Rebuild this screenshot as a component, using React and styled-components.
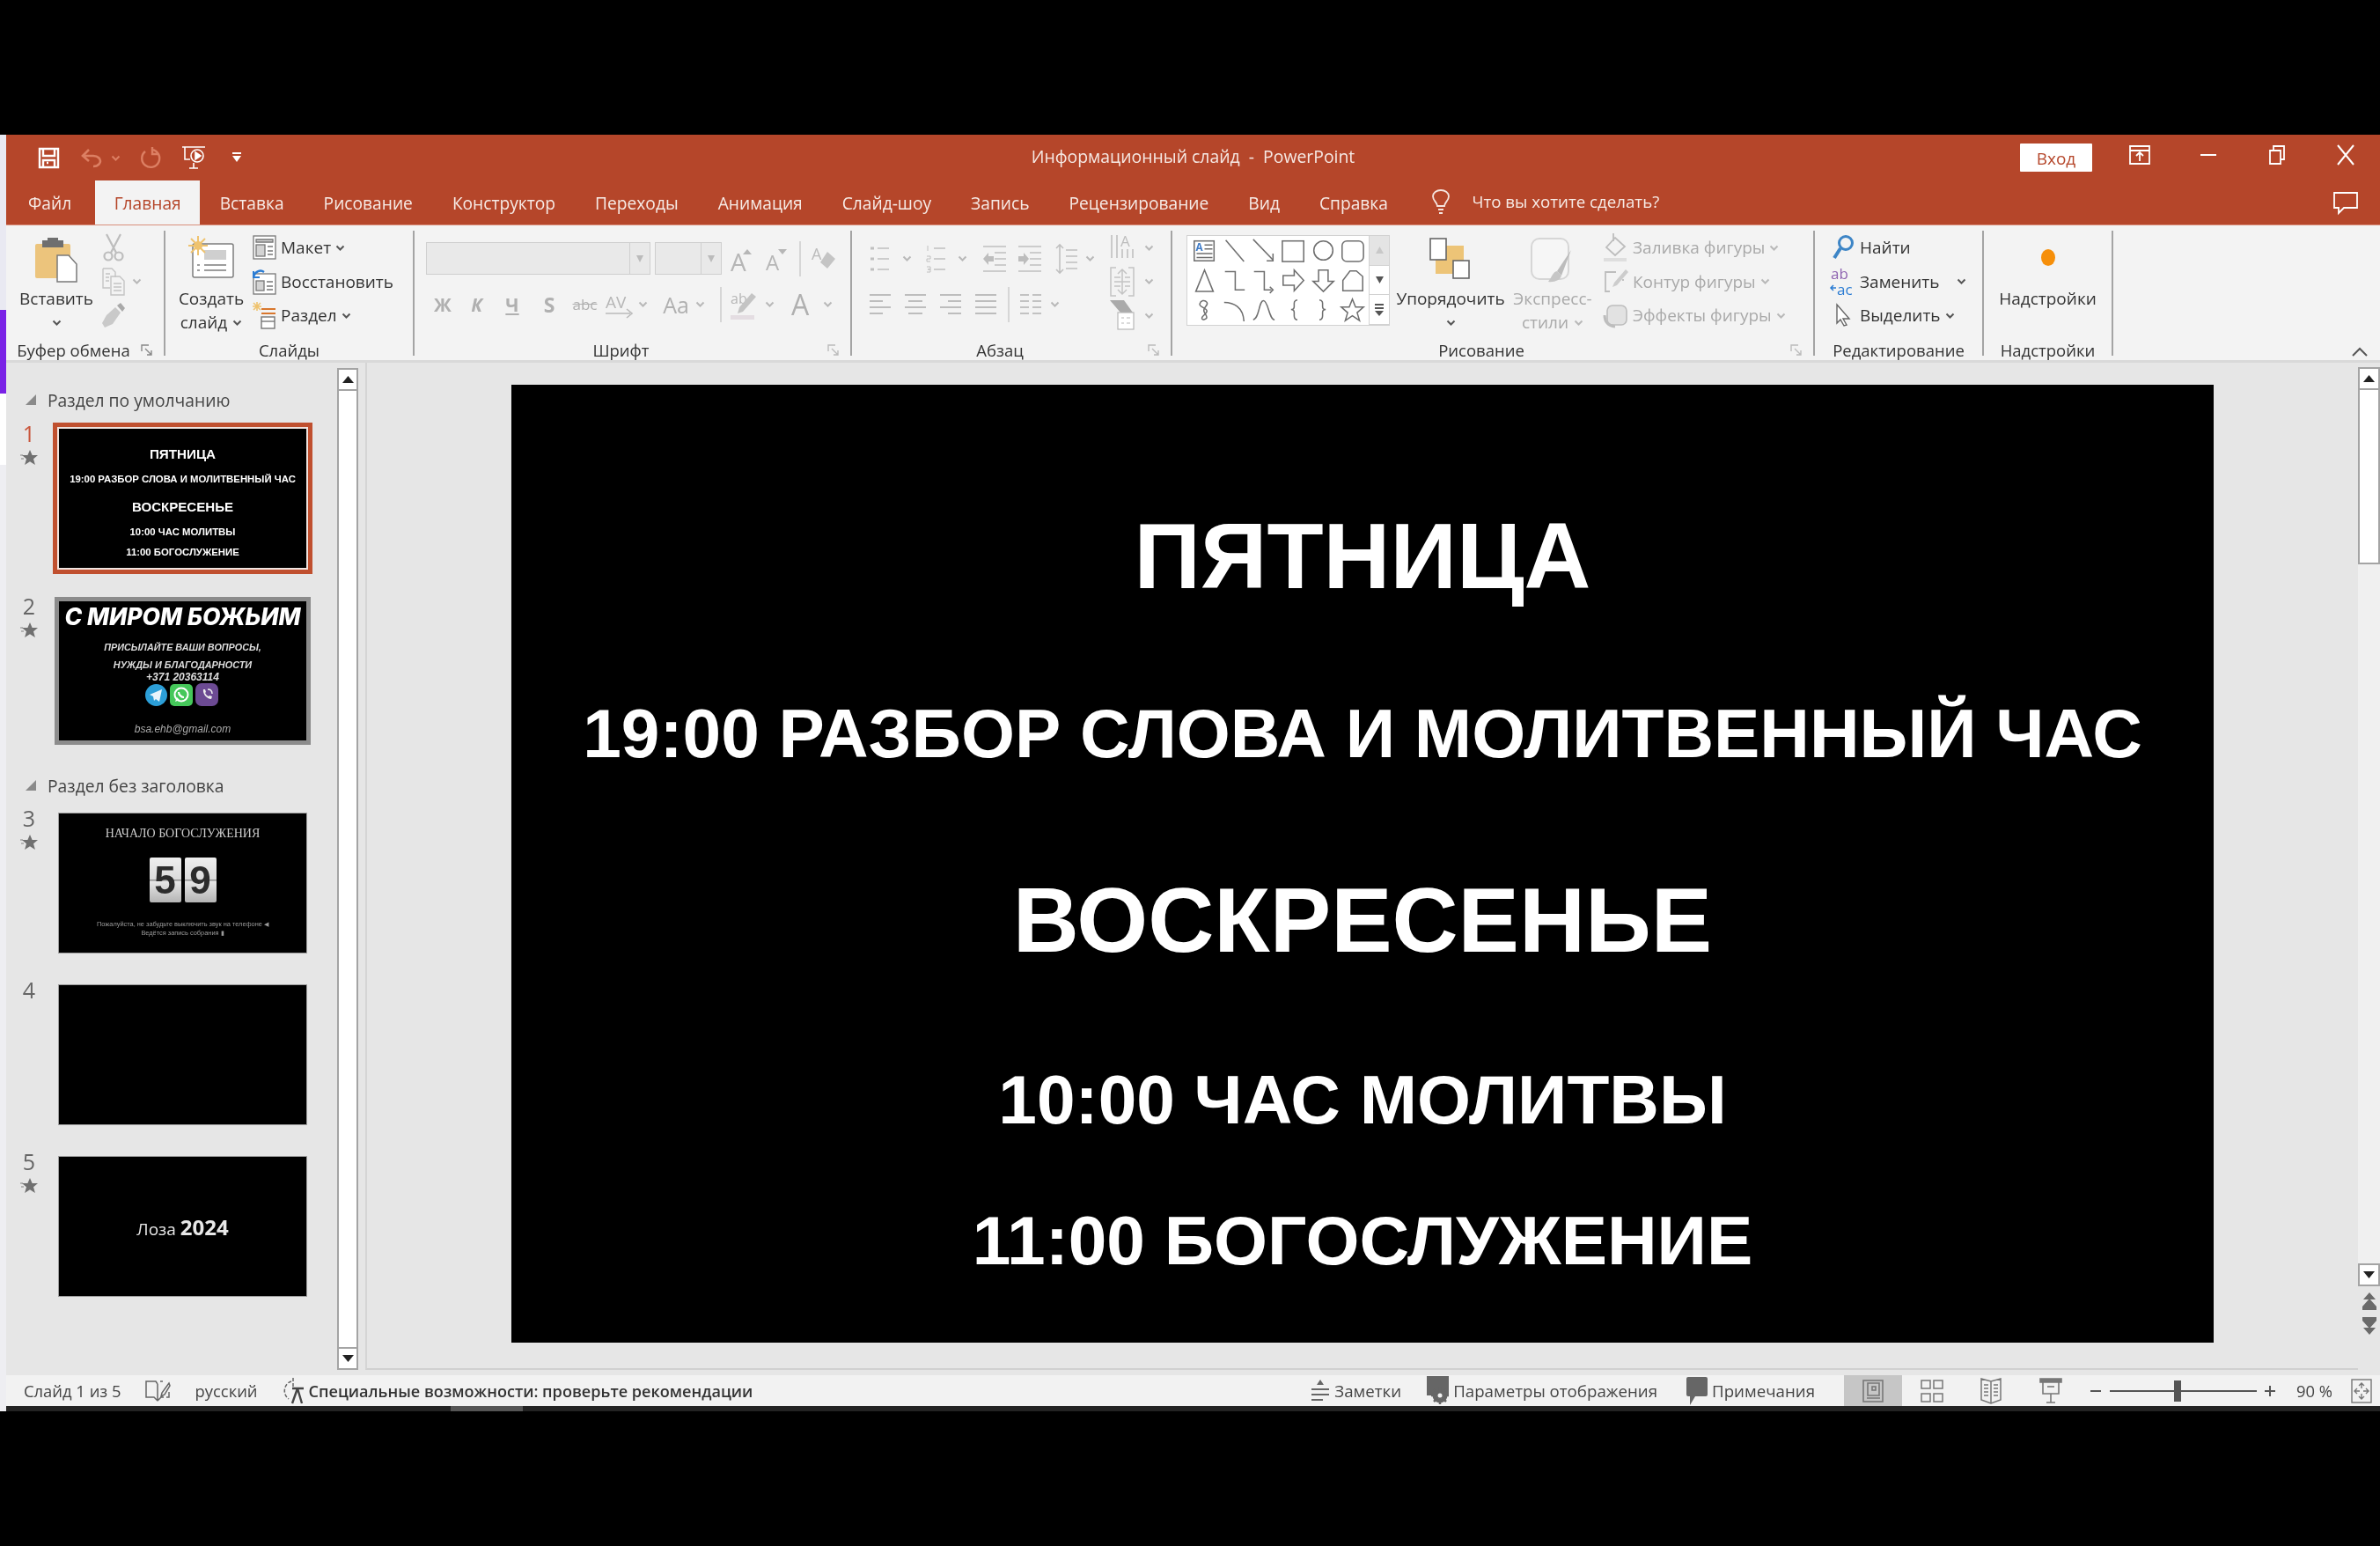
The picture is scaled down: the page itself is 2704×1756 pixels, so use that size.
import React from "react";
import styled, { createGlobalStyle } from "styled-components";

const Global = createGlobalStyle`
  html, body { margin: 0; padding: 0; background: #000; }
  body { width: 2704px; height: 1756px; overflow: hidden; font-family: "Open Sans", "Noto Sans", sans-serif; }
`;

const RED = "#b5462a";

const Page = styled.div`
  width: 2704px;
  height: 1756px;
  padding-top: 153px;
  box-sizing: border-box;
  background: #000;
`;
const Frame = styled.div`
  display: flex;
  height: 1450px;
  filter: blur(0.5px);
`;
const Strip = styled.div`
  width: 7px;
  flex: none;
  display: flex;
  flex-direction: column;
`;
const StripPart = styled.div`
  height: ${(p) => p.$h}px;
  flex-grow: ${(p) => (p.$h ? 0 : 1)};
  background: ${(p) => p.$c};
`;
const Main = styled.div`
  flex: 1;
  display: flex;
  flex-direction: column;
  min-width: 0;
`;
const BottomEdge = styled.div`
  display: flex;
  height: 6px;
  background: #232323;
`;
const EdgeMark = styled.div`
  width: 82px;
  margin-left: 505px;
  background: #555;
`;

const TitleBar = styled.div`
  height: 52px;
  flex: none;
  background: ${RED};
  display: grid;
  grid-template-columns: 1fr auto 1fr;
  align-items: center;
`;
const Quick = styled.div`
  display: flex;
  align-items: center;
  padding-left: 36px;
`;
const QuickCell = styled.div`
  display: flex;
  justify-content: center;
  width: ${(p) => p.$w}px;
  margin-left: ${(p) => p.$ml || 0}px;
`;
const Title = styled.div`
  color: #f6e9e4;
  font-size: 19.4px;
  padding-bottom: 3px;
  white-space: pre;
`;
const WinControls = styled.div`
  display: flex;
  justify-content: flex-end;
  align-items: center;
`;
const Login = styled.div`
  width: 82px;
  height: 32px;
  background: #fff;
  color: ${RED};
  font-size: 19px;
  line-height: 34px;
  text-align: center;
  border-radius: 1px;
  margin-right: 15px;
`;
const WinBtn = styled.div`
  width: 78px;
  height: 40px;
  display: flex;
  align-items: center;
  justify-content: center;
  margin-top: -6px;
`;

const TabBar = styled.div`
  height: 51px;
  flex: none;
  background: ${RED};
  display: flex;
  align-items: stretch;
  padding-left: 2px;
  border-bottom: 1px solid #d98f7c;
  box-sizing: border-box;
`;
const Tab = styled.div`
  padding: 3px ${(p) => p.$px || 22.5}px 0;
  font-size: 19.2px;
  line-height: 46px;
  color: ${(p) => (p.$active ? RED : "#f7ebe6")};
  background: ${(p) => (p.$active ? "#f3f3f3" : "transparent")};
  margin-right: ${(p) => p.$mr || 0}px;
`;
const Tell = styled.div`
  display: flex;
  align-items: center;
  gap: 24px;
  margin-left: 27px;
  color: #f7ebe6;
  font-size: 18.7px;
  padding-bottom: 3px;
`;
const CommentBtn = styled.div`
  margin-left: auto;
  width: 78px;
  display: flex;
  justify-content: center;
  align-items: center;
`;

const Ribbon = styled.div`
  height: 156px;
  flex: none;
  background: #f3f3f3;
  border-bottom: 3px solid #d9d9d9;
  box-sizing: border-box;
  display: flex;
  padding-top: 6px;
`;
const Group = styled.div`
  width: ${(p) => p.$w}px;
  height: 142px;
  flex: none;
  box-sizing: border-box;
  border-right: 2px solid #a4a4a4;
  display: flex;
  flex-direction: column;
`;
const GroupBody = styled.div`
  height: 124px;
  display: flex;
  padding-left: ${(p) => p.$pl || 0}px;
`;
const GroupFoot = styled.div`
  display: flex;
  height: 18px;
`;
const GroupLabel = styled.div`
  flex: 1;
  text-align: center;
  font-size: 18.5px;
  line-height: 24px;
  color: #333;
  white-space: nowrap;
`;
const Launcher = styled.div`
  width: 26px;
  flex: none;
  padding-top: 5px;
  box-sizing: border-box;
`;
const Large = styled.div`
  width: ${(p) => p.$w}px;
  margin-left: ${(p) => p.$ml || 0}px;
  flex: none;
  display: flex;
  flex-direction: column;
  align-items: center;
  color: ${(p) => (p.$off ? "#a9a9a9" : "#333")};
  font-size: 19px;
  line-height: 27px;
  white-space: nowrap;
`;
const LargeIcon = styled.div`
  height: 64px;
  padding-top: ${(p) => p.$pt || 6}px;
  box-sizing: border-box;
`;
const TextChevRow = styled.div`
  display: flex;
  align-items: center;
  justify-content: center;
  gap: 6px;
  height: 27px;
`;
const SmallCol = styled.div`
  display: flex;
  flex-direction: column;
  margin-left: ${(p) => p.$ml || 0}px;
`;
const SmallRow = styled.div`
  height: 38.5px;
  display: flex;
  align-items: center;
  color: ${(p) => (p.$off ? "#a9a9a9" : "#333")};
  font-size: 19px;
  white-space: nowrap;
`;
const SmallIcon = styled.div`
  width: ${(p) => p.$w || 26}px;
  margin-right: ${(p) => p.$mr ?? 6}px;
  display: flex;
  justify-content: center;
  flex: none;
`;
const Tools = styled.div`
  display: flex;
  flex-direction: column;
  padding-top: 13px;
`;
const ToolRow = styled.div`
  display: flex;
  align-items: center;
  height: 37px;
  margin-top: ${(p) => p.$mt || 0}px;
`;
const Cell = styled.div`
  width: ${(p) => p.$w}px;
  margin-left: ${(p) => p.$ml || 0}px;
  flex: none;
  display: flex;
  justify-content: center;
  align-items: center;
  color: #b0b0b0;
  font-size: ${(p) => p.$fs || 20}px;
  font-weight: ${(p) => p.$fw || 400};
  font-style: ${(p) => p.$fst || "normal"};
  text-decoration: ${(p) => p.$td || "none"};
`;
const VSep = styled.div`
  width: 2px;
  height: 40px;
  flex: none;
  background: #d6d6d6;
  margin-left: ${(p) => p.$ml || 0}px;
`;
const InputBox = styled.div`
  width: ${(p) => p.$w}px;
  height: 37px;
  margin-left: ${(p) => p.$ml || 0}px;
  box-sizing: border-box;
  border: 1px solid #cfcfcf;
  background: #e9e9e9;
  flex: none;
  display: flex;
  justify-content: flex-end;
`;
const InputDrop = styled.div`
  width: 22px;
  border-left: 1px solid #cfcfcf;
  display: flex;
  align-items: center;
  justify-content: center;
`;
const Gallery = styled.div`
  margin: 5px 0 0 16px;
  width: 231px;
  height: 103px;
  flex: none;
  box-sizing: border-box;
  border: 1px solid #d2d2d2;
  background: #fff;
  display: flex;
`;
const ShapeGrid = styled.div`
  width: 206px;
  padding: 0 0 0 3px;
  box-sizing: border-box;
  display: grid;
  grid-template-columns: repeat(6, 33.6px);
  grid-auto-rows: 33.6px;
  justify-items: center;
  align-items: center;
`;
const GalleryScroll = styled.div`
  flex: 1;
  display: flex;
  flex-direction: column;
  border-left: 1px solid #d2d2d2;
`;
const GalleryBtn = styled.div`
  flex: 1;
  display: flex;
  align-items: center;
  justify-content: center;
  background: ${(p) => (p.$off ? "#e4e4e4" : "#fff")};
  border-bottom: 1px solid #d2d2d2;
`;
const Dot = styled.div`
  width: 16px;
  height: 19px;
  margin-top: 20px;
  border-radius: 50%;
  background: #f68f0a;
`;
const Collapse = styled.div`
  margin: 133px 0 0 auto;
  width: 32px;
`;

const Workspace = styled.div`
  flex: 1;
  min-height: 0;
  display: flex;
  background: #e6e6e6;
`;
const Pane = styled.div`
  width: 376px;
  flex: none;
  padding-top: 27px;
  box-sizing: border-box;
`;
const SectionHead = styled.div`
  display: flex;
  align-items: center;
  height: 30px;
  margin-top: ${(p) => p.$mt || 0}px;
  padding-left: 22px;
  gap: 13px;
  font-size: 19.3px;
  color: #444;
  white-space: nowrap;
`;
const SlideRow = styled.div`
  display: flex;
  margin-top: ${(p) => p.$mt}px;
`;
const NumCol = styled.div`
  width: 52px;
  margin-right: 8px;
  flex: none;
  display: flex;
  flex-direction: column;
  align-items: center;
`;
const Num = styled.div`
  font-size: 25px;
  line-height: 26px;
  margin-top: -8px;
  color: ${(p) => (p.$active ? "#c9563c" : "#666")};
`;
const StarBox = styled.div`
  margin-top: 6px;
`;
const Thumb = styled.div`
  width: 281px;
  height: 158px;
  flex: none;
  background: #000;
  overflow: hidden;
  font-size: 14.5px;
  box-shadow: ${(p) => p.$ring};
  display: flex;
  flex-direction: column;
  align-items: center;
`;
const ScrollBar = styled.div`
  width: ${(p) => p.$w}px;
  flex: none;
  display: flex;
  flex-direction: column;
  padding-top: ${(p) => p.$pt}px;
  padding-bottom: ${(p) => p.$pb}px;
  box-sizing: border-box;
`;
const ScrollBtn = styled.div`
  height: 26px;
  flex: none;
  box-sizing: border-box;
  border: 2px solid #a4a4a4;
  background: #fff;
  display: flex;
  align-items: center;
  justify-content: center;
`;
const ScrollThumb = styled.div`
  height: ${(p) => (p.$h ? p.$h + "px" : "auto")};
  flex-grow: ${(p) => (p.$h ? 0 : 1)};
  box-sizing: border-box;
  border: 2px solid #a4a4a4;
  border-top: none;
  border-bottom: ${(p) => (p.$h ? "2px solid #a4a4a4" : "none")};
  background: #fff;
`;
const ScrollTrack = styled.div`
  flex: 1;
  background: #f0f0f0;
`;
const PageJump = styled.div`
  display: flex;
  justify-content: center;
  margin-top: ${(p) => p.$mt}px;
`;
const EditorWrap = styled.div`
  flex: 1;
  min-width: 0;
  margin-left: 8px;
  margin-bottom: 6px;
  border-left: 2px solid #d5d5d5;
  border-bottom: 2px solid #d0d0d0;
  padding: 25px 0 0 164px;
  box-sizing: border-box;
`;
const SlideMain = styled.div`
  width: 1934px;
  height: 1088px;
  background: #000;
  font-size: 100px;
`;
const Lines = styled.div`
  display: flex;
  flex-direction: column;
  align-items: center;
  padding-top: 1.415em;
`;
const Line = styled.div`
  font-family: "Liberation Sans", Arial, sans-serif;
  font-weight: 700;
  color: #fff;
  line-height: 1;
  white-space: nowrap;
  font-size: ${(p) => p.$s}em;
  margin-top: ${(p) => p.$mt / p.$s}em;
`;
const T2Head = styled.div`
  font-family: Inter, sans-serif;
  font-weight: 800;
  font-style: italic;
  font-size: 26.5px;
  line-height: 34px;
  color: #fff;
  white-space: nowrap;
`;
const T2Text = styled.div`
  font-family: "Liberation Sans", sans-serif;
  font-style: italic;
  font-weight: ${(p) => p.$fw || 700};
  font-size: ${(p) => p.$fs}px;
  line-height: ${(p) => p.$lh}px;
  margin-top: ${(p) => p.$mt}px;
  color: ${(p) => p.$c || "#ddd"};
  white-space: nowrap;
`;
const T2Icons = styled.div`
  display: flex;
  align-items: center;
  gap: 3px;
  height: 26px;
  margin-left: -2px;
`;
const T3Title = styled.div`
  font-family: "Liberation Serif", serif;
  font-size: 14px;
  line-height: 16px;
  margin-top: 15px;
  color: #ccc;
  white-space: nowrap;
`;
const Flips = styled.div`
  display: flex;
  gap: 4px;
  margin-top: 19px;
`;
const Flip = styled.div`
  width: 36px;
  height: 51px;
  border-radius: 2px;
  background: linear-gradient(#eeeeee, #dcdcdc 48%, #8e8e8e 50%, #e6e6e6 54%, #b4b4b4);
  font-family: "Liberation Sans", sans-serif;
  font-weight: 700;
  font-size: 44px;
  line-height: 51px;
  text-align: center;
  color: #2c2c2c;
`;
const T3Note = styled.div`
  font-family: "Liberation Sans", sans-serif;
  font-size: 7.4px;
  line-height: 10px;
  margin-top: ${(p) => p.$mt || 0}px;
  color: #9a9a9a;
  white-space: nowrap;
`;
const T5Text = styled.div`
  margin: auto;
  display: flex;
  align-items: baseline;
  gap: 5px;
  color: #e8e8e8;
`;
const T5Word = styled.span`
  font-size: ${(p) => p.$fs}px;
  font-weight: ${(p) => p.$fw};
`;

const Status = styled.div`
  height: 35px;
  flex: none;
  background: #f2f2f2;
  display: flex;
  align-items: center;
  font-size: 18.4px;
  color: #444;
  white-space: nowrap;
`;
const StatusItem = styled.div`
  display: flex;
  align-items: center;
  gap: ${(p) => p.$gap ?? 5}px;
  margin-left: ${(p) => p.$ml || 0}px;
  font-size: ${(p) => p.$fs || 18.4}px;
  font-weight: ${(p) => p.$fw || 400};
  color: ${(p) => p.$c || "#444"};
`;
const StatusRight = styled.div`
  margin-left: auto;
  margin-right: 6px;
  display: flex;
  align-items: center;
  height: 100%;
`;
const ViewBtn = styled.div`
  width: ${(p) => p.$w}px;
  height: 100%;
  margin-left: ${(p) => p.$ml || 0}px;
  flex: none;
  display: flex;
  align-items: center;
  justify-content: center;
  background: ${(p) => (p.$active ? "#c6c6c6" : "transparent")};
`;
const ZoomTrack = styled.div`
  width: 167px;
  height: 2px;
  margin-left: 9px;
  background: #555;
  position: relative;
  flex: none;
`;
const ZoomThumb = styled.div`
  position: absolute;
  left: 73px;
  top: -11px;
  width: 8px;
  height: 24px;
  background: #555;
`;

const Svg = styled.svg`
  display: block;
  flex: none;
  overflow: visible;
  fill: none;
  stroke: ${(p) => p.$c || "#b4b4b4"};
  stroke-width: ${(p) => p.$sw || 1.5};
`;
const Ic = ({ w, h, c, sw, children }) => (
  <Svg width={w} height={h} viewBox={`0 0 ${w} ${h}`} $c={c} $sw={sw}>{children}</Svg>
);
const Chev = ({ c = "#555" }) => (
  <Ic w={11} h={7} c={c} sw={2}><path d="M1.5 1.5l4 4 4-4" /></Ic>
);
const OffChev = () => <Chev c="#b8b8b8" />;
const Tri = ({ up, c = "#222", w = 14 }) => (
  <Ic w={w} h={8} c="none"><path d={up ? `M0 8L${w / 2} 0L${w} 8z` : `M0 0L${w / 2} 8L${w} 0z`} fill={c} /></Ic>
);
const Launch = ({ c = "#888" }) => (
  <Ic w={14} h={14} c={c} sw={1.4}><path d="M1 8V1h8M5 5l7 7M12 7v5H7" /></Ic>
);

const Save = () => (
  <Ic w={25} h={25} c="#fff" sw={2.4}>
    <path d="M2 2h21v21H2z" /><path d="M6 2v8h13V2" /><path d="M6 23v-8h13v8M10 18h2" />
  </Ic>
);
const Undo = () => (
  <Ic w={24} h={22} c="#dc7f63" sw={2.6}><path d="M9 2L2 9l7 6M3 9h11c6 0 8 4 8 6s-2 6-8 6" /></Ic>
);
const Redo = () => (
  <Ic w={24} h={24} c="#dc7f63" sw={2.4}><path d="M7 5a10 10 0 1 0 8-2M15 0v8h7" /></Ic>
);
const Present = () => (
  <Ic w={28} h={28} c="#fff" sw={1.6}>
    <path d="M1 2h26M4 2v14h6M9 26h10M14 20v6" /><circle cx="18" cy="12" r="7" /><path d="M16 8l6 4-6 4z" fill="#fff" />
  </Ic>
);
const QaMore = () => (
  <Ic w={10} h={12} c="none"><path d="M0 0h10v2H0zM0 4h10L5 11z" fill="#fff" /></Ic>
);
const GalleryMore = () => (
  <Ic w={10} h={14} c="none"><path d="M0 0h10v2H0zM0 4h10v2H0zM0 8h10l-5 6z" fill="#555" /></Ic>
);
const BoxUp = () => (
  <Ic w={24} h={22} c="#fff" sw={1.8}><path d="M1 1h22v20H1zM1 6h22M12 18v-9M8 12l4-4 4 4" /></Ic>
);
const Minimize = () => <Ic w={18} h={4} c="#fff" sw={2}><path d="M0 2h18" /></Ic>;
const Restore = () => (
  <Ic w={18} h={24} c="#fff" sw={1.8}><path d="M1 7h12v15H1zM5 7V2h12v15h-4" /></Ic>
);
const CloseX = () => <Ic w={20} h={24} c="#fff" sw={2}><path d="M1 1l18 22M19 1L1 23" /></Ic>;
const Comment = () => (
  <Ic w={28} h={25} c="#fff" sw={1.8}><path d="M1 1h26v17H12l-6 6v-6H1z" /></Ic>
);
const Bulb = () => (
  <Ic w={22} h={28} c="#f5e4de" sw={1.8}>
    <path d="M7 19c0-4-5-6-5-11a9 7 0 0 1 18 0c0 5-5 7-5 11zM8 23h6M9 27h4" />
  </Ic>
);

const PasteIcon = () => (
  <Ic w={48} h={50} c="none">
    <rect x="0" y="7" width="40" height="39" rx="2" fill="#ecc47c" />
    <path d="M8 3h6V0h12v3h6v8H8z" fill="#6f6f6f" />
    <path d="M25 20h13l9 10v20H25z" fill="#fff" stroke="#7a7a7a" strokeWidth="1.5" />
  </Ic>
);
const Scissors = () => (
  <Ic w={24} h={32} c="#bdbdbd" sw={2.2}>
    <circle cx="6" cy="26" r="4.5" /><circle cx="18" cy="26" r="4.5" /><path d="M4 1l11 21M20 1L9 22" />
  </Ic>
);
const Copy = () => (
  <Ic w={26} h={32} c="#c4c4c4" sw={1.4}>
    <path d="M1 1h10l4 4v6M1 1v22h8M10 10h10l5 5v16H10zM13 18h9M13 22h9M13 26h9M4 7h5M4 11h4M4 15h4" />
  </Ic>
);
const Brush = () => (
  <Ic w={28} h={30} c="none">
    <path d="M16 6l6 6-9 13-9 4-3-5 5-9z" fill="#c9c9c9" /><path d="M18 4l4-3 5 6-3 4z" fill="#a9a9a9" />
  </Ic>
);
const NewSlide = () => (
  <Ic w={52} h={50} c="#7d7d7d" sw={1.5}>
    <rect x="5" y="9" width="46" height="38" rx="2" fill="#fff" />
    <rect x="18" y="16" width="25" height="11" fill="#cfcfcf" stroke="none" />
    <path d="M18 33h25M18 39h25M10 33h3M10 39h3" />
    <path d="M11 0v22M0 11h22M3 3l16 16M19 3L3 19" stroke="#efc36f" strokeWidth="2" />
    <circle cx="11" cy="11" r="5" fill="#efc36f" stroke="none" />
  </Ic>
);
const LayoutIcon = () => (
  <Ic w={27} h={28} c="#777" sw={1.3}>
    <rect x="1" y="1" width="25" height="26" fill="#fff" /><path d="M4 5h19v3H4z" fill="#d3d3d3" />
    <rect x="4" y="11" width="10" height="13" fill="#d3d3d3" /><path d="M17 13h6M17 18h6M17 22h6" />
  </Ic>
);
const ResetIcon = () => (
  <Ic w={27} h={30} c="#777" sw={1.3}>
    <rect x="1" y="6" width="25" height="23" fill="#fff" /><rect x="4" y="14" width="9" height="11" fill="#d3d3d3" />
    <path d="M16 15h7M16 20h7M16 24h7" />
    <path d="M1 9c2-6 8-8 12-5" stroke="#2b7cd3" strokeWidth="2.4" /><path d="M1 3v7h7" stroke="#2b7cd3" strokeWidth="2" />
  </Ic>
);
const SectionIcon = () => (
  <Ic w={27} h={32} c="#777" sw={1.4}>
    <path d="M5 1v10M0 6h10M1 2l8 8M9 2l-8 8" stroke="#efc36f" strokeWidth="1.6" />
    <path d="M10 9h16M10 14h16" stroke="#d9772d" strokeWidth="2" />
    <rect x="10" y="18" width="15" height="13" fill="#fff" /><path d="M10 23h15" />
  </Ic>
);
const Bigger = ({ down }) => (
  <Ic w={26} h={32} c="none">
    <text x="0" y={down ? 29 : 30} fontSize={down ? 24 : 28} fill="#b6b6b6" fontFamily="Open Sans">A</text>
    <path d={down ? "M14 5h10l-5 6z" : "M14 11l5-6 5 6z"} fill="#b6b6b6" />
  </Ic>
);
const Eraser = () => (
  <Ic w={28} h={32} c="none">
    <text x="0" y="17" fontSize="18" fill="#bcbcbc" fontFamily="Open Sans">A</text>
    <path d="M18 8l9 8-9 11-8-7z" fill="#c4c4c4" />
  </Ic>
);
const AvIcon = () => (
  <Ic w={34} h={34} c="#bbb" sw={1.6}>
    <text x="2" y="21" fontSize="19" fill="#b6b6b6" stroke="none" fontFamily="Open Sans">AV</text>
    <path d="M2 27h28M26 22l6 5-6 5" />
  </Ic>
);
const Highlight = () => (
  <Ic w={30} h={34} c="none">
    <text x="0" y="16" fontSize="16" fill="#b6b6b6" fontFamily="Open Sans">ab</text>
    <path d="M24 4l5 4-15 17-6 2 2-7z" fill="#c4c4c4" /><rect x="0" y="29" width="27" height="5" fill="#e4dde2" />
  </Ic>
);
const FontColor = () => (
  <Ic w={22} h={30} c="none">
    <text x="0" y="27" fontSize="32" fill="#b0b0b0" fontFamily="Open Sans">A</text>
  </Ic>
);
const ListI = ({ numbered }) => (
  <Ic w={23} h={32} c="#c0c0c0" sw={1.6}>
    <path d="M9 4h13M9 16h13M9 28h13" />
    {numbered ? (
      <path d="M2 1v6M1 13h4v3H1v3h4M1 25h4v3H2h3v3H1" strokeWidth="1" />
    ) : (
      <path d="M1 4h4M1 16h4M1 28h4" strokeWidth="3" />
    )}
  </Ic>
);
const IndentI = ({ right }) => (
  <Ic w={28} h={32} c="#c0c0c0" sw={1.6}>
    <path d="M1 2h26M1 30h26M14 9h13M14 16h13M14 23h13" />
    <path d={right ? "M1 13h6v-4l6 7-6 7v-4H1z" : "M13 13H7V9l-6 7 6 7v-4h6z"} fill="#bdbdbd" stroke="none" />
  </Ic>
);
const LineSp = () => (
  <Ic w={26} h={36} c="#c0c0c0" sw={1.6}>
    <path d="M12 8h13M12 15h13M12 22h13M12 29h13M5 2v32M1 6l4-4 4 4M1 30l4 4 4-4" />
  </Ic>
);
const TextDir = () => (
  <Ic w={28} h={32} c="#c0c0c0" sw={1.6}>
    <path d="M2 2v26M8 2v26M14 18v10M20 18v10M26 18v10" />
    <text x="12" y="15" fontSize="17" fill="#bdbdbd" stroke="none" fontFamily="Open Sans">A</text>
  </Ic>
);
const AlignText = () => (
  <Ic w={28} h={34} c="#c4c4c4" sw={1.5}>
    <path d="M7 1H1v32h6M21 1h6v32h-6M14 4v26M9 8l5-5 5 5M9 26l5 5 5-5M5 12h7M17 12h6M5 17h18M5 22h7M17 22h6" />
  </Ic>
);
const SmartArt = () => (
  <Ic w={28} h={34} c="#b8b8b8" sw={1.2}>
    <path d="M0 0h16l10 14H12z" fill="#aaa" stroke="none" />
    <rect x="9" y="14" width="18" height="19" fill="#fff" /><path d="M13 20h3M19 20h4M13 26h3M19 26h4" />
  </Ic>
);
const AlignI = ({ mode }) => {
  const d = {
    l: "M0 2h24M0 9h15M0 16h24M0 23h15",
    c: "M0 2h24M4 9h16M0 16h24M4 23h16",
    r: "M0 2h24M9 9h15M0 16h24M9 23h15",
    j: "M0 2h24M0 9h24M0 16h24M0 23h24",
  }[mode];
  return <Ic w={24} h={25} c="#bdbdbd" sw={1.8}><path d={d} /></Ic>;
};
const Columns = () => (
  <Ic w={24} h={25} c="#c2c2c2" sw={1.8}>
    <path d="M0 2h10M14 2h10M0 9h10M14 9h10M0 16h10M14 16h10M0 23h10M14 23h10" />
  </Ic>
);

const shapes = [
  <g key="0"><rect x="2" y="3" width="25" height="25" fill="#fff" /><text x="4" y="16" fontSize="13" fontWeight="700" fill="#3f7cc8" stroke="none" fontFamily="Open Sans">A</text><path d="M15 8h10M15 13h10M5 19h20M5 24h20" /></g>,
  <path key="1" d="M4 2l23 27" />,
  <g key="2"><path d="M2 1l25 26" /><path d="M27 19v9h-8" /></g>,
  <rect key="3" x="1" y="3" width="27" height="26" />,
  <circle key="4" cx="15" cy="15" r="12" />,
  <rect key="5" x="2" y="3" width="27" height="26" rx="6" />,
  <path key="6" d="M15 2L4 29h22z" />,
  <path key="7" d="M3 4h13v23h12" />,
  <g key="8"><path d="M3 4h13v23h9" /><path d="M23 23l4 4-4 4" /></g>,
  <path key="9" d="M2 9h14V2l12 13-12 13v-7H2z" />,
  <path key="10" d="M9 2h12v14h7L15 29 2 16h7z" />,
  <path key="11" d="M3 28V15l9-12h8l8 7v18z" />,
  <path key="12" d="M13 28c-5-3 5-7 5-11S8 12 9 8s6-6 9-2-7 7-3 13 4 8-2 9" />,
  <path key="13" d="M2 6c12 0 24 6 25 24" />,
  <path key="14" d="M2 28C10 26 9 4 15 4s7 24 14 24" />,
  <path key="15" d="M20 3c-5 0-4 5-4 8s-2 4-4 4c2 0 4 1 4 4s-1 9 4 9" />,
  <path key="16" d="M10 3c5 0 4 5 4 8s2 4 4 4c-2 0-4 1-4 4s1 9-4 9" />,
  <path key="17" d="M15 2l4 10h10l-8 7 3 10-9-6-9 6 3-10-8-7h10z" />,
];

const Arrange = () => (
  <Ic w={46} h={48} c="#666" sw={1.6}>
    <rect x="6" y="9" width="32" height="32" fill="#edc477" stroke="none" />
    <rect x="0" y="1" width="18" height="24" fill="#fff" />
    <rect x="26" y="26" width="18" height="20" fill="#fff" />
  </Ic>
);
const Styles = () => (
  <Ic w={50} h={52} c="#d6d6d6" sw={2}>
    <rect x="1" y="1" width="42" height="46" rx="9" fill="#f6f6f6" />
    <path d="M46 14L30 38l5 5z" fill="#bcbcbc" stroke="none" />
    <path d="M30 38c-5 1-6 7-10 12 7 1 14-2 15-7z" fill="#c6c6c6" stroke="none" />
  </Ic>
);
const FillI = () => (
  <Ic w={28} h={34} c="#bdbdbd" sw={1.8}>
    <path d="M13 6L3 17l10 9 11-10zM11 1v9" /><path d="M0 29h26v4H0z" fill="#dedede" stroke="none" />
  </Ic>
);
const OutlineI = () => (
  <Ic w={28} h={30} c="#bdbdbd" sw={1.8}>
    <path d="M14 4H2v22h5M22 12v2" /><path d="M25 1l3 3-13 15-5 2 2-5z" fill="#ccc" stroke="none" />
  </Ic>
);
const EffectI = () => (
  <Ic w={28} h={28} c="#bdbdbd" sw={1.6}>
    <rect x="4" y="3" width="22" height="22" rx="6" fill="#e2e2e2" /><path d="M1 14c0 8 4 12 12 13" strokeWidth="3" />
  </Ic>
);
const Find = () => (
  <Ic w={24} h={30} c="#3d85c6" sw={3}><circle cx="15" cy="10" r="7.5" /><path d="M9 16L2 27" strokeWidth="4" /></Ic>
);
const ReplaceI = () => (
  <Ic w={28} h={36} c="none">
    <text x="0" y="15" fontSize="17" fill="#8e63b0" fontFamily="Open Sans">ab</text>
    <text x="7" y="33" fontSize="17" fill="#2b7cd3" fontFamily="Open Sans">ac</text>
    <path d="M0 25h6M3 22l-3 3 3 3" stroke="#2b7cd3" strokeWidth="1.5" />
  </Ic>
);
const Cursor = () => (
  <Ic w={18} h={26} c="#666" sw={1.4}><path d="M2 1l14 16H9l4 7-3 1-4-7-4 4z" fill="#fff" /></Ic>
);
const Star = () => (
  <Ic w={20} h={18} c="none">
    <path d="M11 0l2.6 6H20l-5 4.2 1.9 6.8L11 13.2 5.1 17 7 10.2 2 6h6.4z" fill="#707070" />
    <path d="M0 6h3M1 10h3" stroke="#808080" strokeWidth="1" />
  </Ic>
);

const Book = () => (
  <Ic w={28} h={26} c="#666" sw={1.5}><path d="M14 24L10 20H1V2h11l2 3M14 24V5M14 24l4-4h3M17 2h3M27 14v6h-3M27 4L19 15l-1 4 4-2 6-10z" /></Ic>
);
const Access = () => (
  <Ic w={28} h={30} c="#666" sw={1.5}>
    <path d="M13 0v10M11 4C3 6 0 18 8 24" strokeDasharray="4 2" />
    <path d="M12 12h13M18 12l5 17M18 12l-6 17" stroke="#444" strokeWidth="2.4" />
  </Ic>
);
const Notes = () => (
  <Ic w={20} h={27} c="#666" sw={2}><path d="M6 7l4-6 4 6z" fill="#666" stroke="none" /><path d="M0 12h20M0 18h20M0 24h13" /></Ic>
);
const Display = () => (
  <Ic w={26} h={34} c="none">
    <rect x="0" y="0" width="25" height="22" fill="#666" />
    <circle cx="15" cy="22" r="6" stroke="#666" strokeWidth="5" />
    <path d="M15 12v20M5 22h20M8 15l14 14M22 15L8 29" stroke="#666" strokeWidth="2.5" />
    <circle cx="15" cy="22" r="2.5" fill="#f2f2f2" />
  </Ic>
);
const Notes2 = () => (
  <Ic w={24} h={32} c="none">
    <path d="M2 0h20a2 2 0 0 1 2 2v18a2 2 0 0 1-2 2H10l-6 10v-10H2a2 2 0 0 1-2-2V2a2 2 0 0 1 2-2z" fill="#666" />
  </Ic>
);
const NormalV = () => (
  <Ic w={24} h={26} c="#777" sw={1.6}><rect x="1" y="1" width="22" height="24" /><path d="M6 4h13v14H6zM5 21h15" /><rect x="11" y="8" width="4" height="4" /></Ic>
);
const SorterV = () => (
  <Ic w={26} h={26} c="#777" sw={1.5}>
    <rect x="1" y="1" width="10" height="9" /><rect x="15" y="1" width="10" height="9" /><rect x="1" y="16" width="10" height="9" /><rect x="15" y="16" width="10" height="9" />
  </Ic>
);
const ReadV = () => (
  <Ic w={24} h={30} c="#777" sw={1.5}>
    <path d="M1 1l11 3 11-3v24l-11 4-11-4zM12 4v25M4 8h5M4 12h5M4 16h5M4 20h5M15 8h5M15 12h5M15 16h5M15 20h5" />
  </Ic>
);
const ShowV = () => (
  <Ic w={24} h={30} c="#777" sw={1.6}>
    <path d="M0 2h24M3 2v16h18V2M12 18v10M7 28h10" /><path d="M0 1h24v4H0z" fill="#777" /><path d="M8 10h8" />
  </Ic>
);
const Plus = ({ minus }) => (
  <Ic w={14} h={14} c="#555" sw={2}><path d={minus ? "M1 7h12" : "M1 7h12M7 1v12"} /></Ic>
);
const Fit = () => (
  <Ic w={24} h={28} c="#777" sw={1.4}><rect x="1" y="1" width="22" height="26" /><path d="M12 5v6M9 8l3-3 3 3M12 23v-6M9 20l3 3 3-3M5 14h5M7 11l-3 3 3 3M19 14h-5M17 11l3 3-3 3" /></Ic>
);

const Telegram = () => (
  <Ic w={25} h={25} c="none"><circle cx="12.5" cy="12.5" r="12.5" fill="#2c9fd8" /><path d="M5 12l14-6-3 14-4-3-2 2-1-5z" fill="#e8f4fb" /></Ic>
);
const Whats = () => (
  <Ic w={26} h={25} c="none"><rect width="26" height="25" rx="5" fill="#45c75a" /><circle cx="13" cy="12" r="7.5" stroke="#fff" strokeWidth="2" /><path d="M6 20l2-5 3 3z" fill="#fff" /><path d="M10 9c0 3 3 6 6 6" stroke="#fff" strokeWidth="2.2" /></Ic>
);
const Viber = () => (
  <Ic w={26} h={26} c="none"><rect width="26" height="26" rx="7" fill="#6c4a93" /><path d="M9 7c-1 5 4 11 9 11l1-3-3-1-1 1c-2-1-3-2-4-4l1-1-1-3z" fill="#eee" /><path d="M14 7c3 0 5 2 5 5" stroke="#eee" /></Ic>
);
const JumpUp = () => (
  <Ic w={16} h={20} c="none"><path d="M8 0l7 8H1zM8 7l8 9H0zM0 16h16v4H0z" fill="#6a6a6a" /></Ic>
);
const JumpDown = () => (
  <Ic w={16} h={20} c="none"><path d="M0 0h16v4H0zM0 4h16l-8 9zM1 12h14l-7 8z" fill="#6a6a6a" /></Ic>
);
const PaneTri = () => (
  <Ic w={12} h={12} c="none"><path d="M12 0v12H0z" fill="#8a8a8a" /></Ic>
);

const tabs = ["Вставка", "Рисование", "Конструктор", "Переходы", "Анимация", "Слайд-шоу", "Запись", "Рецензирование", "Вид", "Справка"];

const SlideLines = () => (
  <Lines>
    <Line $s={1.05} $mt={0}>ПЯТНИЦА</Line>
    <Line $s={0.784} $mt={1.103}>19:00 РАЗБОР СЛОВА И МОЛИТВЕННЫЙ ЧАС</Line>
    <Line $s={1.04} $mt={1.208}>ВОСКРЕСЕНЬЕ</Line>
    <Line $s={0.784} $mt={1.125}>10:00 ЧАС МОЛИТВЫ</Line>
    <Line $s={0.784} $mt={0.824}>11:00 БОГОСЛУЖЕНИЕ</Line>
  </Lines>
);

export default function App() {
  return (
    <Page>
      <Global />
      <Frame>
        <Strip>
          <StripPart $h={199} $c="#e9e9f2" />
          <StripPart $h={95} $c="#7a22e6" />
          <StripPart $h={81} $c="#fff" />
          <StripPart $c="#eeeef2" />
        </Strip>
        <Main>
          <TitleBar>
            <Quick>
              <QuickCell $w={25}><Save /></QuickCell>
              <QuickCell $w={24} $ml={24}><Undo /></QuickCell>
              <QuickCell $w={11} $ml={10}><Chev c="#dc7f63" /></QuickCell>
              <QuickCell $w={24} $ml={21}><Redo /></QuickCell>
              <QuickCell $w={28} $ml={24}><Present /></QuickCell>
              <QuickCell $w={10} $ml={30}><QaMore /></QuickCell>
            </Quick>
            <Title>Информационный слайд  -  PowerPoint</Title>
            <WinControls>
              <Login>Вход</Login>
              <WinBtn><BoxUp /></WinBtn>
              <WinBtn><Minimize /></WinBtn>
              <WinBtn><Restore /></WinBtn>
              <WinBtn><CloseX /></WinBtn>
            </WinControls>
          </TitleBar>
          <TabBar>
            <Tab $mr={4} $px={23}>Файл</Tab>
            <Tab $active $px={21.5}>Главная</Tab>
            {tabs.map((t) => <Tab key={t}>{t}</Tab>)}
            <Tell><Bulb />Что вы хотите сделать?</Tell>
            <CommentBtn><Comment /></CommentBtn>
          </TabBar>
          <Ribbon>
            <Group $w={181}>
              <GroupBody>
                <Large $w={80} $ml={17}>
                  <LargeIcon $pt={8}><PasteIcon /></LargeIcon>
                  <span>Вставить</span>
                  <TextChevRow><Chev /></TextChevRow>
                </Large>
                <SmallCol $ml={12}>
                  <SmallRow><SmallIcon $mr={4}><Scissors /></SmallIcon></SmallRow>
                  <SmallRow><SmallIcon $mr={8}><Copy /></SmallIcon><OffChev /></SmallRow>
                  <SmallRow><SmallIcon><Brush /></SmallIcon></SmallRow>
                </SmallCol>
              </GroupBody>
              <GroupFoot><GroupLabel>Буфер обмена</GroupLabel><Launcher><Launch /></Launcher></GroupFoot>
            </Group>
            <Group $w={283}>
              <GroupBody>
                <Large $w={80} $ml={12}>
                  <LargeIcon><NewSlide /></LargeIcon>
                  <span>Создать</span>
                  <TextChevRow>слайд<Chev /></TextChevRow>
                </Large>
                <SmallCol $ml={7}>
                  <SmallRow><SmallIcon><LayoutIcon /></SmallIcon>Макет&nbsp;<Chev /></SmallRow>
                  <SmallRow><SmallIcon><ResetIcon /></SmallIcon>Восстановить</SmallRow>
                  <SmallRow><SmallIcon><SectionIcon /></SmallIcon>Раздел&nbsp;<Chev /></SmallRow>
                </SmallCol>
              </GroupBody>
              <GroupFoot><GroupLabel>Слайды</GroupLabel></GroupFoot>
            </Group>
            <Group $w={497}>
              <GroupBody $pl={13}>
                <Tools>
                  <ToolRow>
                    <InputBox $w={255}><InputDrop><Tri c="#bbb" w={8} /></InputDrop></InputBox>
                    <InputBox $w={76} $ml={5}><InputDrop><Tri c="#bbb" w={8} /></InputDrop></InputBox>
                    <Cell $w={26} $ml={10}><Bigger /></Cell>
                    <Cell $w={26} $ml={14}><Bigger down /></Cell>
                    <VSep $ml={12} />
                    <Cell $w={32} $ml={10}><Eraser /></Cell>
                  </ToolRow>
                  <ToolRow $mt={15}>
                    <Cell $w={38} $fw={700} $fs={21}>Ж</Cell>
                    <Cell $w={39} $fw={700} $fs={21} $fst="italic">К</Cell>
                    <Cell $w={42} $fw={700} $fs={21} $td="underline">Ч</Cell>
                    <Cell $w={42} $fw={700} $fs={23}>S</Cell>
                    <Cell $w={39} $fs={17} $td="line-through">abc</Cell>
                    <Cell $w={38}><AvIcon /></Cell>
                    <Cell $w={16}><OffChev /></Cell>
                    <Cell $w={36} $ml={12} $fs={25}>Aa</Cell>
                    <Cell $w={16} $ml={1}><OffChev /></Cell>
                    <VSep $ml={15} />
                    <Cell $w={30} $ml={10}><Highlight /></Cell>
                    <Cell $w={16} $ml={6}><OffChev /></Cell>
                    <Cell $w={34} $ml={11}><FontColor /></Cell>
                    <Cell $w={16} $ml={5}><OffChev /></Cell>
                  </ToolRow>
                </Tools>
              </GroupBody>
              <GroupFoot><GroupLabel>Шрифт</GroupLabel><Launcher><Launch c="#bbb" /></Launcher></GroupFoot>
            </Group>
            <Group $w={364}>
              <GroupBody $pl={20}>
                <Tools>
                  <ToolRow>
                    <ListI />
                    <Cell $w={16} $ml={11}><OffChev /></Cell>
                    <Cell $w={23} $ml={14}><ListI numbered /></Cell>
                    <Cell $w={16} $ml={10}><OffChev /></Cell>
                    <Cell $w={28} $ml={15}><IndentI /></Cell>
                    <Cell $w={28} $ml={12}><IndentI right /></Cell>
                    <Cell $w={26} $ml={15}><LineSp /></Cell>
                    <Cell $w={16} $ml={5}><OffChev /></Cell>
                  </ToolRow>
                  <ToolRow $mt={15}>
                    <Cell $w={24}><AlignI mode="l" /></Cell>
                    <Cell $w={24} $ml={16}><AlignI mode="c" /></Cell>
                    <Cell $w={24} $ml={16}><AlignI mode="r" /></Cell>
                    <Cell $w={24} $ml={16}><AlignI mode="j" /></Cell>
                    <VSep $ml={13} />
                    <Cell $w={24} $ml={12}><Columns /></Cell>
                    <Cell $w={16} $ml={7}><OffChev /></Cell>
                  </ToolRow>
                </Tools>
                <SmallCol $ml={15}>
                  <SmallRow><SmallIcon $w={28} $mr={11}><TextDir /></SmallIcon><OffChev /></SmallRow>
                  <SmallRow><SmallIcon $w={28} $mr={11}><AlignText /></SmallIcon><OffChev /></SmallRow>
                  <SmallRow><SmallIcon $w={28} $mr={11}><SmartArt /></SmallIcon><OffChev /></SmallRow>
                </SmallCol>
              </GroupBody>
              <GroupFoot><GroupLabel>Абзац</GroupLabel><Launcher><Launch c="#bbb" /></Launcher></GroupFoot>
            </Group>
            <Group $w={730}>
              <GroupBody>
                <Gallery>
                  <ShapeGrid>
                    {shapes.map((s, i) => (
                      <Svg key={i} width="27" height="27" viewBox="0 0 30 30" $c="#6f6f6f" $sw={1.7}>{s}</Svg>
                    ))}
                  </ShapeGrid>
                  <GalleryScroll>
                    <GalleryBtn $off><Tri up c="#c8c8c8" w={9} /></GalleryBtn>
                    <GalleryBtn><Tri c="#555" w={9} /></GalleryBtn>
                    <GalleryBtn><GalleryMore /></GalleryBtn>
                  </GalleryScroll>
                </Gallery>
                <Large $w={122} $ml={8}>
                  <LargeIcon $pt={8}><Arrange /></LargeIcon>
                  <span>Упорядочить</span>
                  <TextChevRow><Chev /></TextChevRow>
                </Large>
                <Large $w={96} $ml={7} $off>
                  <LargeIcon $pt={8}><Styles /></LargeIcon>
                  <span>Экспресс-</span>
                  <TextChevRow>стили<OffChev /></TextChevRow>
                </Large>
                <SmallCol $ml={10}>
                  <SmallRow $off><SmallIcon $w={28} $mr={5}><FillI /></SmallIcon>Заливка фигуры&nbsp;<OffChev /></SmallRow>
                  <SmallRow $off><SmallIcon $w={28} $mr={5}><OutlineI /></SmallIcon>Контур фигуры&nbsp;<OffChev /></SmallRow>
                  <SmallRow $off><SmallIcon $w={28} $mr={5}><EffectI /></SmallIcon>Эффекты фигуры&nbsp;<OffChev /></SmallRow>
                </SmallCol>
              </GroupBody>
              <GroupFoot><GroupLabel>Рисование</GroupLabel><Launcher><Launch c="#bbb" /></Launcher></GroupFoot>
            </Group>
            <Group $w={192}>
              <GroupBody $pl={18}>
                <SmallCol>
                  <SmallRow><SmallIcon $w={28} $mr={5}><Find /></SmallIcon>Найти</SmallRow>
                  <SmallRow><SmallIcon $w={28} $mr={5}><ReplaceI /></SmallIcon>Заменить&nbsp;&nbsp;&nbsp;&nbsp;<Chev /></SmallRow>
                  <SmallRow><SmallIcon $w={28} $mr={5}><Cursor /></SmallIcon>Выделить&nbsp;<Chev /></SmallRow>
                </SmallCol>
              </GroupBody>
              <GroupFoot><GroupLabel>Редактирование</GroupLabel></GroupFoot>
            </Group>
            <Group $w={147}>
              <GroupBody>
                <Large $w={145}>
                  <LargeIcon $pt={1}><Dot /></LargeIcon>
                  <span>Надстройки</span>
                </Large>
              </GroupBody>
              <GroupFoot><GroupLabel>Надстройки</GroupLabel></GroupFoot>
            </Group>
            <Collapse><Ic w={18} h={10} c="#555" sw={2}><path d="M1 9l8-8 8 8" /></Ic></Collapse>
          </Ribbon>
          <Workspace>
            <Pane>
              <SectionHead><PaneTri />Раздел по умолчанию</SectionHead>
              <SlideRow $mt={18}>
                <NumCol><Num $active>1</Num><StarBox><Star /></StarBox></NumCol>
                <Thumb $ring="0 0 0 2px #f0e4e0, 0 0 0 7px #c0502f">
                  <SlideLines />
                </Thumb>
              </SlideRow>
              <SlideRow $mt={38}>
                <NumCol><Num>2</Num><StarBox><Star /></StarBox></NumCol>
                <Thumb $ring="0 0 0 5px #8c8c8c">
                  <T2Head>С МИРОМ БОЖЬИМ</T2Head>
                  <T2Text $fs={10.8} $lh={16} $mt={10}>ПРИСЫЛАЙТЕ ВАШИ ВОПРОСЫ,</T2Text>
                  <T2Text $fs={10.9} $lh={16} $mt={4}>НУЖДЫ И БЛАГОДАРНОСТИ</T2Text>
                  <T2Text $fs={12} $lh={14} $mt={-1}>+371 20363114</T2Text>
                  <T2Icons><Telegram /><Whats /><Viber /></T2Icons>
                  <T2Text $fs={12} $lh={16} $mt={18} $c="#aaa" $fw={400}>bsa.ehb@gmail.com</T2Text>
                </Thumb>
              </SlideRow>
              <SectionHead $mt={36}><PaneTri />Раздел без заголовка</SectionHead>
              <SlideRow $mt={17}>
                <NumCol><Num>3</Num><StarBox><Star /></StarBox></NumCol>
                <Thumb $ring="0 0 0 1px #9c9c9c">
                  <T3Title>НАЧАЛО БОГОСЛУЖЕНИЯ</T3Title>
                  <Flips><Flip>5</Flip><Flip>9</Flip></Flips>
                  <T3Note $mt={20}>Пожалуйста, не забудьте выключить звук на телефоне ◀</T3Note>
                  <T3Note>Ведётся запись собрания ▮</T3Note>
                </Thumb>
              </SlideRow>
              <SlideRow $mt={37}>
                <NumCol><Num>4</Num></NumCol>
                <Thumb $ring="0 0 0 1px #9c9c9c" />
              </SlideRow>
              <SlideRow $mt={37}>
                <NumCol><Num>5</Num><StarBox><Star /></StarBox></NumCol>
                <Thumb $ring="0 0 0 1px #9c9c9c">
                  <T5Text><T5Word $fs={19} $fw={400}>Лоза</T5Word><T5Word $fs={24} $fw={700}>2024</T5Word></T5Text>
                </Thumb>
              </SlideRow>
            </Pane>
            <ScrollBar $w={24} $pt={6} $pb={6}>
              <ScrollBtn><Tri up w={13} /></ScrollBtn>
              <ScrollThumb />
              <ScrollBtn><Tri w={13} /></ScrollBtn>
            </ScrollBar>
            <EditorWrap>
              <SlideMain><SlideLines /></SlideMain>
            </EditorWrap>
            <ScrollBar $w={25} $pt={5} $pb={46}>
              <ScrollBtn><Tri up w={13} /></ScrollBtn>
              <ScrollThumb $h={198} />
              <ScrollTrack />
              <ScrollBtn><Tri w={13} /></ScrollBtn>
              <PageJump $mt={7}><JumpUp /></PageJump>
              <PageJump $mt={8}><JumpDown /></PageJump>
            </ScrollBar>
          </Workspace>
          <Status>
            <StatusItem $ml={20}>Слайд 1 из 5</StatusItem>
            <StatusItem $ml={27}><Book /></StatusItem>
            <StatusItem $ml={29}>русский</StatusItem>
            <StatusItem $ml={27} $gap={3} $fw={600} $fs={18.1} $c="#333"><Access />Специальные возможности: проверьте рекомендации</StatusItem>
            <StatusRight>
              <StatusItem $gap={6} $fs={18.7}><Notes />Заметки</StatusItem>
              <StatusItem $ml={29} $gap={4} $fs={18.7}><Display />Параметры отображения</StatusItem>
              <StatusItem $ml={33} $gap={5} $fs={18.7}><Notes2 />Примечания</StatusItem>
              <ViewBtn $w={66} $ml={33} $active><NormalV /></ViewBtn>
              <ViewBtn $w={68}><SorterV /></ViewBtn>
              <ViewBtn $w={66}><ReadV /></ViewBtn>
              <ViewBtn $w={70}><ShowV /></ViewBtn>
              <StatusItem $ml={9}><Plus minus /></StatusItem>
              <ZoomTrack><ZoomThumb /></ZoomTrack>
              <StatusItem $ml={8}><Plus /></StatusItem>
              <StatusItem $ml={23}>90 %</StatusItem>
              <ViewBtn $w={30} $ml={18}><Fit /></ViewBtn>
            </StatusRight>
          </Status>
          <BottomEdge><EdgeMark /></BottomEdge>
        </Main>
      </Frame>
    </Page>
  );
}
